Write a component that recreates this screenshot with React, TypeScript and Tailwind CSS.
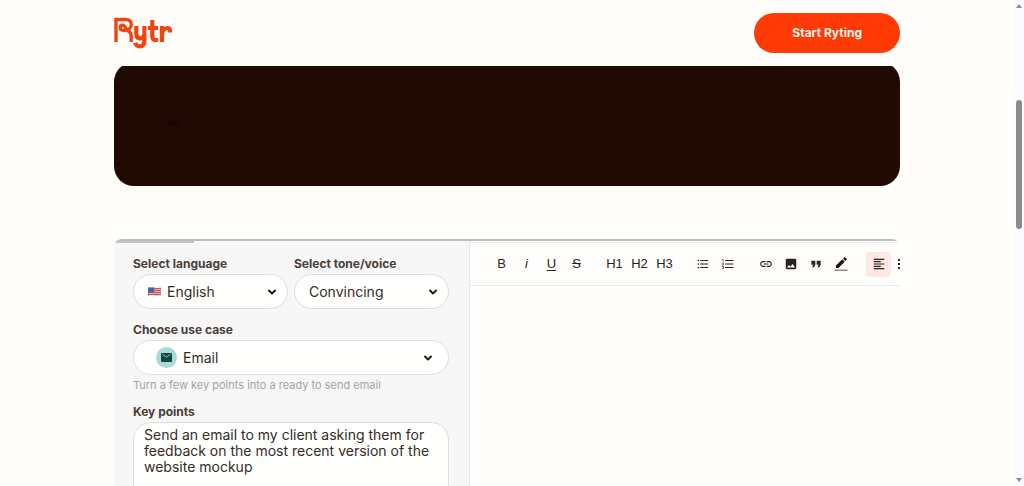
import type { ReactNode } from "react";
import {
  MdFormatAlignLeft,
  MdFormatListBulleted,
  MdFormatListNumbered,
  MdFormatQuote,
  MdImage,
  MdLink,
} from "react-icons/md";

function Logo() {
  return (
    <svg
      viewBox="0 0 60 34"
      className="h-[34px] w-[60px]"
      fill="none"
      stroke="#f2440f"
      strokeWidth="4.200"
      role="img"
      aria-label="Rytr"
    >
      <path d="M2 26V3.500H11.500c3.900 0 5.800 2 5.800 4.900 0 3.400-2.400 5.700-6 6-3.800.3-5.200-.8-5.200-2.600 0-1.600 1.200-2.600 2.600-2.600 2.700 0 2.700 4.200 5.200 5.500 2.400 1.200 3.300 2.600 3.300 5.200V26" strokeWidth="3.400" />
      <path d="M22.300 10v7.500c0 3.300 1.300 4.800 3.800 4.800 2.800 0 4.300-1.800 4.300-4.900V10m0 7v7.500c0 3.600-1.500 5.800-4.600 5.800-2.400 0-3.900-1-4.600-3.500" />
      <path d="M38.300 4v16c0 2.700 1 4 3.300 4h2.600M34 12h10.200" />
      <path d="M48 26V10m0 9.500c0-5 2.200-7.500 5.800-7.500 1.800 0 2.400 1 2.400 4.500" />
    </svg>
  );
}

function Chevron() {
  return (
    <svg viewBox="0 0 10 8" className="pointer-events-none h-2 w-2.5 shrink-0" fill="none" stroke="#241c1a" strokeWidth="2" aria-hidden="true">
      <path d="M2 2.500 5 5.500 8 2.500" strokeLinecap="round" strokeLinejoin="round" />
    </svg>
  );
}

function Flag() {
  return (
    <svg viewBox="0 0 13 9" className="h-[9px] w-[13px] shrink-0" aria-hidden="true">
      <path fill="#e3a9b2" d="M0 .8Q3 0 6.500.6T13 .3v8Q10 9 6.500 8.400T0 8.700z" />
      <path stroke="#cc5563" strokeWidth="1" d="M0 1.500h13M0 3.500h13M0 5.500h13M0 7.500h13" />
      <path fill="#4a649c" d="M0 .5h6v5H0z" />
    </svg>
  );
}

function MailBadge() {
  return (
    <svg viewBox="0 0 21 21" className="h-[21px] w-[21px] shrink-0" aria-hidden="true">
      <circle cx="10.5" cy="10.500" r="10.500" fill="#a9dad6" />
      <rect x="5" y="6" width="11" height="9" rx="1" fill="#114840" />
      <path d="M6.500 7.500 10.500 10 14.500 7.500" fill="none" stroke="#8cc4bd" />
    </svg>
  );
}

function Field(props: { id: string; label: string; children: ReactNode; className?: string }) {
  return (
    <div className={props.className}>
      <label htmlFor={props.id} className="block text-[12px] leading-4 font-bold text-[#4a3d39]">
        {props.label}
      </label>
      {props.children}
    </div>
  );
}

function SelectBox(props: { id: string; value: string; icon?: ReactNode; className: string }) {
  return (
    <div className={`mt-0.5 flex h-[35px] items-center gap-1.5 rounded-full border border-[#dededc] bg-[#fffffd] ${props.className}`}>
      {props.icon}
      <select id={props.id} className="min-w-0 flex-1 appearance-none bg-transparent text-[14px] leading-5 text-[#352b29] outline-none">
        <option>{props.value}</option>
      </select>
      <Chevron />
    </div>
  );
}

function Tool(props: { label: string; active?: boolean; children: ReactNode }) {
  return (
    <button
      type="button"
      aria-label={props.label}
      className={`flex h-[25px] w-[25px] shrink-0 items-center justify-center rounded ${props.active ? "bg-[#fde8e4]" : ""}`}
    >
      {props.children}
    </button>
  );
}

function Toolbar() {
  return (
    <div className="flex h-11 items-center gap-[13px] overflow-hidden border-y border-[#ececea] pl-[19px] font-['Liberation_Sans',sans-serif] text-[13px] text-[#2a2220]">
      <div className="flex shrink-0">
        <Tool label="Bold">B</Tool>
        <Tool label="Italic"><i>i</i></Tool>
        <Tool label="Underline"><span className="underline underline-offset-2">U</span></Tool>
        <Tool label="Strikethrough"><s>S</s></Tool>
      </div>
      <div className="flex shrink-0">
        <Tool label="Heading 1">H1</Tool>
        <Tool label="Heading 2">H2</Tool>
        <Tool label="Heading 3">H3</Tool>
      </div>
      <div className="flex shrink-0">
        <Tool label="Bulleted list"><MdFormatListBulleted size={14} /></Tool>
        <Tool label="Numbered list"><MdFormatListNumbered size={14} /></Tool>
      </div>
      <div className="flex shrink-0">
        <Tool label="Link"><MdLink size={14} /></Tool>
        <Tool label="Image"><MdImage size={14} /></Tool>
        <Tool label="Quote"><MdFormatQuote size={16} /></Tool>
        <Tool label="Highlight">
          <svg viewBox="0 0 14 15" className="h-[15px] w-3.5" aria-hidden="true">
            <path fill="#1d1716" d="M2 11V8.500L8.300 2.200l2.500 2.500L4.500 11zM9 1.500l1-1q.6-.5 1.200 0l1.300 1.300q.5.6 0 1.200l-1 1z" />
            <path fill="#8f8b89" d="M.5 12.500h13V14H.5z" />
          </svg>
        </Tool>
      </div>
      <div className="flex shrink-0">
        <Tool label="Align left" active><MdFormatAlignLeft size={14} /></Tool>
        <Tool label="Checklist">
          <svg viewBox="0 0 12 14" className="h-3.5 w-3" fill="#2a2220" aria-hidden="true">
            <path d="M0 2h2v2H0zM0 6h2v2H0zM0 10h2v2H0zM4 2h8v2H4zM4 6h8v2H4zM4 10h8v2H4z" />
          </svg>
        </Tool>
      </div>
    </div>
  );
}

function Scrollbar() {
  return (
    <div className="flex w-2.5 shrink-0 flex-col items-center bg-[#fcfcfe] py-1" aria-hidden="true">
      <svg viewBox="0 0 6 4" className="h-1 w-1.5"><path fill="#8b8b89" d="M3 0l3 4H0z" /></svg>
      <div className="flex w-1.5 flex-1 flex-col py-px">
        <div className="grow-[91]" />
        <div className="grow-[129] rounded-full bg-[#8b8b89]" />
        <div className="grow-[248]" />
      </div>
      <svg viewBox="0 0 6 4" className="h-1 w-1.5"><path fill="#8b8b89" d="M3 4l3-4H0z" /></svg>
    </div>
  );
}

export default function App() {
  return (
    <div className="flex h-screen overflow-hidden bg-[#fffefb] font-['Inter','Noto_Sans',sans-serif]">
      <div className="min-w-0 flex-1 overflow-hidden">
        <div className="mx-auto max-w-[834px] px-6">
          <header className="flex h-[66px] items-center justify-between">
            <a href="#home"><Logo /></a>
            <button type="button" className="h-10 rounded-full bg-[#ff3a04] px-[38px] text-[12px] font-bold text-[#fff5ee]">
              Start Ryting
            </button>
          </header>
          <section className="h-[120px] overflow-hidden">
            <div className="-mt-1 flex h-[124px] items-center rounded-[20px] bg-[#200a03] pl-[54px]">
              <svg viewBox="0 0 22 8" className="h-2 w-[22px]" fill="none" stroke="#120906" strokeWidth="1.500" aria-hidden="true">
                <path d="M1 2h4l-2 3M7 1.500 10 4v3M5 6l3-3" />
              </svg>
            </div>
          </section>

          <main className="mt-[53px] overflow-hidden rounded-t-lg">
            <div className="mx-0.5 h-0.5 bg-[#bdbdb9]" />
            <div className="flex">
              <form className="w-[356px] shrink-0 border-r border-[#e8e8e8] bg-[#f7f7f7]">
                <div className="h-0.5 w-20 bg-[#c3c3c1]" />
                <div className="pt-[13px] pr-5 pl-[19px]">
                  <div className="grid grid-cols-2 gap-1.5">
                    <Field id="language" label="Select language">
                      <SelectBox id="language" value="English" icon={<Flag />} className="pr-2.5 pl-3.5" />
                    </Field>
                    <Field id="tone" label="Select tone/voice">
                      <SelectBox id="tone" value="Convincing" className="pr-2.5 pl-3.5" />
                    </Field>
                  </div>
                  <Field id="usecase" label="Choose use case" className="mt-[13px]">
                    <SelectBox id="usecase" value="Email" icon={<MailBadge />} className="pr-[15px] pl-[22px]" />
                  </Field>
                  <p className="mt-0.5 text-[11px] leading-4 text-[#a5a3a2]">Turn a few key points into a ready to send email</p>
                  <Field id="points" label="Key points" className="mt-[11px]">
                    <textarea
                      id="points"
                      rows={7}
                      className="mt-0.5 block w-full resize-none rounded-[18px] border border-[#dededc] bg-[#fffffd] py-1 pr-1 pl-2.5 text-[14px] leading-4 text-[#352b29] outline-none"
                      defaultValue="Send an email to my client asking them for feedback on the most recent version of the website mockup"
                    />
                  </Field>
                </div>
              </form>
              <div className="min-w-0 flex-1 bg-[#fffefd] pt-px">
                <Toolbar />
              </div>
            </div>
          </main>
        </div>
      </div>
      <Scrollbar />
    </div>
  );
}
